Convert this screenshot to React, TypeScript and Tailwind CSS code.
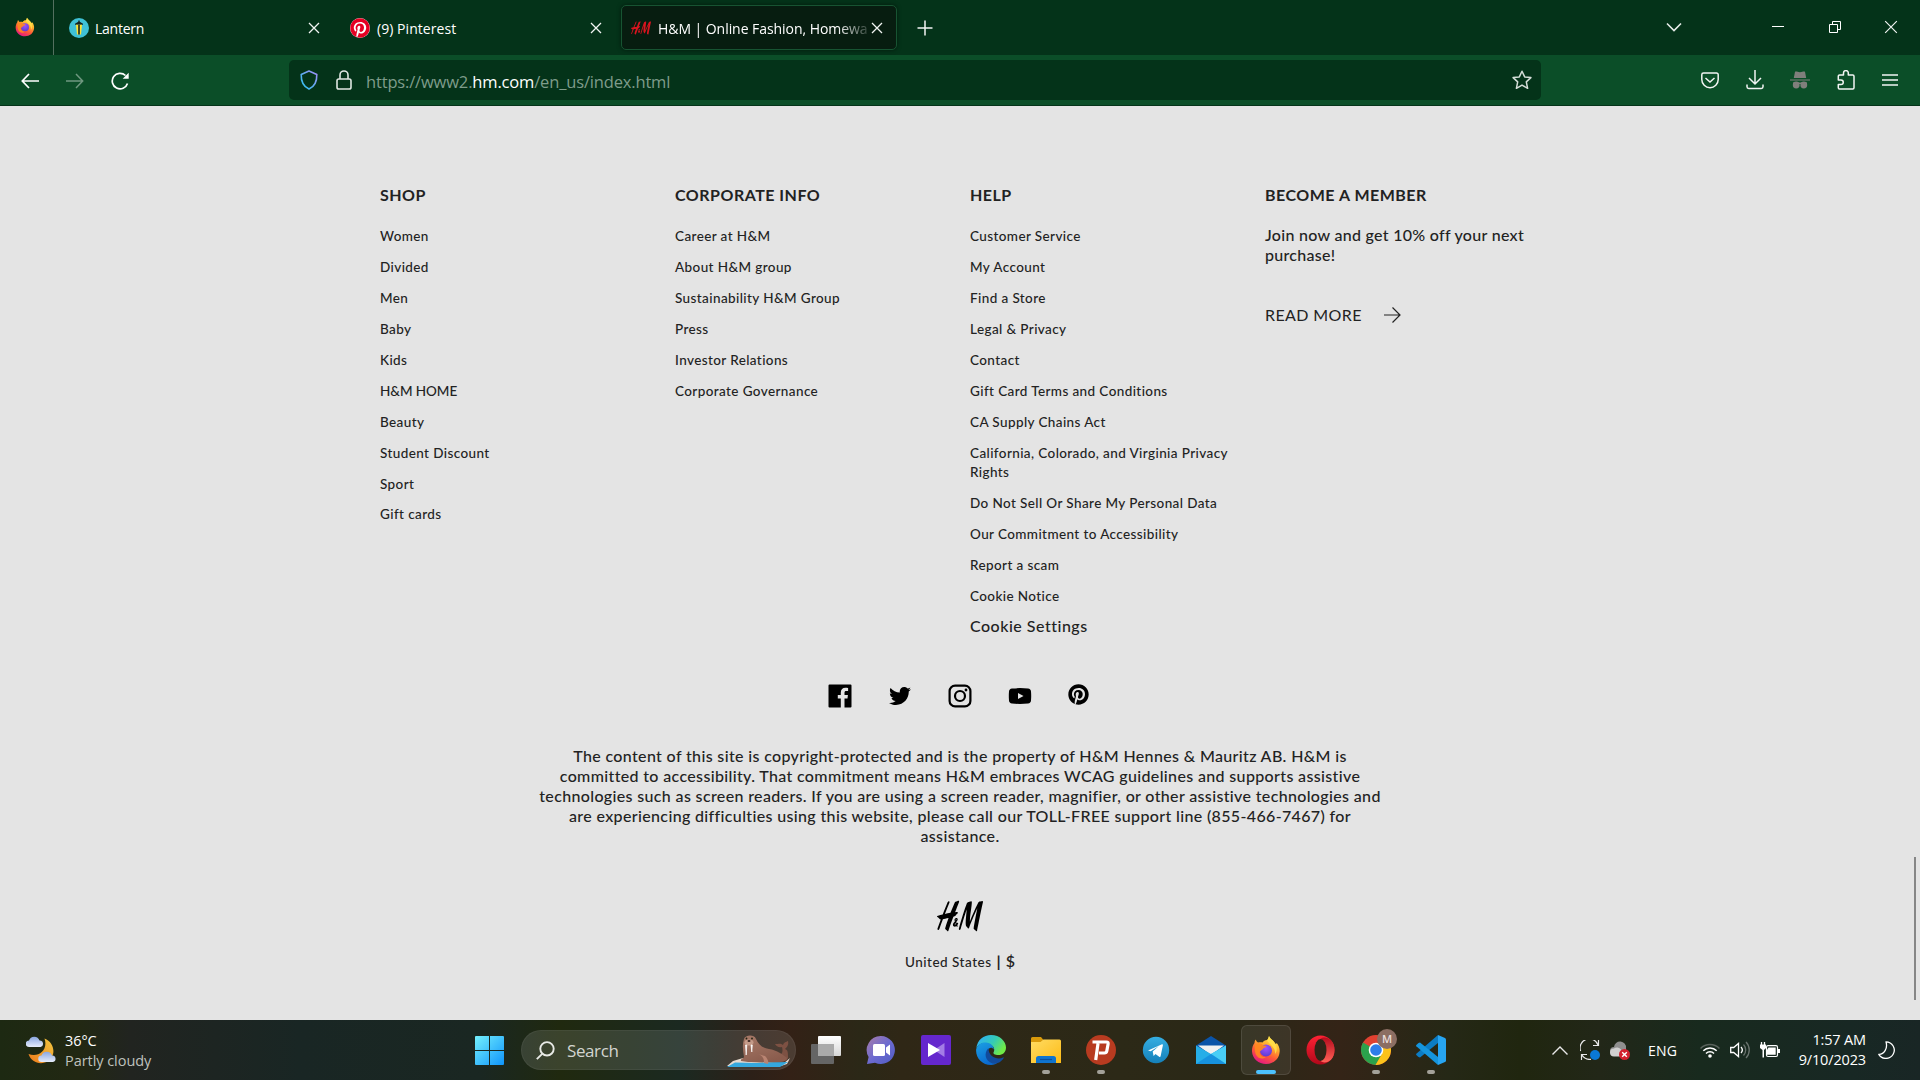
import React from "react";
import { FaTwitter, FaPinterest } from "react-icons/fa";
import { SiHandm } from "react-icons/si";

type IconProps = { className?: string };

const ui = "font-['Open_Sans',sans-serif]";

function FirefoxIcon({ className, id }: { className?: string; id: string }) {
  return (
    <svg viewBox="0 0 30 30" className={className}>
      <defs>
        <linearGradient id={id + "a"} x1="0.8" y1="0" x2="0.3" y2="1">
          <stop offset="0" stopColor="#fff44f" />
          <stop offset="0.35" stopColor="#ffb02e" />
          <stop offset="0.65" stopColor="#ff5a36" />
          <stop offset="1" stopColor="#e31587" />
        </linearGradient>
        <radialGradient id={id + "b"} cx="0.5" cy="0.3" r="0.7">
          <stop offset="0" stopColor="#a050ff" />
          <stop offset="1" stopColor="#5b3ed0" />
        </radialGradient>
      </defs>
      <path d="M18 1c1 3 5 4.500 6.500 8 .8-.2 1.200-1 1.200-1C28 10.500 29 14 28.600 17 28 24.500 22 29 15 29 7.500 29 1.500 24 1 16.500c-.2-3.500 1-6.500 2.500-8.500 0-1.500.5-2.500 1.200-3.500.5 1.500 1.500 2.500 2.300 3 1.500-.5 3-.5 4.500 0C12.500 6 14 5 16 5c1 0 1.500-2.500 2-4z" fill={`url(#${id}a)`} />
      <circle cx="15" cy="15.500" r="6" fill={`url(#${id}b)`} />
      <path d="M4 10c3-2.500 6-2 8 .2 1.500.6 3.200.4 3.500.9 0 1.200-2.200 1.800-3.300 2.300-.4 1.600-3 2-3.500 3.600 0 3 3 5.500 6.300 5-5 3.500-10 .5-11-5.500-.3-2.300-.4-4.500 0-6.500z" fill="#ff8a1e" opacity="0.9" />
      <path d="M18 1c1 3 5 4.500 6.500 8 2 4 1.500 8-.5 10 .5-5-2-7-4.500-9.500-1.500-1.500-3-3-3.500-4.500 1 0 1.500-2.500 2-4z" fill="#ffe14a" opacity="0.85" />
    </svg>
  );
}

function LanternIcon({ className }: IconProps) {
  return (
    <svg viewBox="0 0 20 20" className={className}>
      <circle cx="10" cy="10" r="10" fill="#3fc1d6" />
      <path d="M9.300 2.500h1.400v1.300l3.300 2v1H6v-1l3.300-2z" fill="#14231f" />
      <path d="M7 6.800h6L12 16.500H8z" fill="#ffe233" />
      <path d="M9.200 6.800h1.600v9.700H9.200z" fill="#14231f" />
    </svg>
  );
}

function CloseX({ className, w = 1.3 }: { className?: string; w?: number }) {
  return (
    <svg viewBox="0 0 12 12" className={className} fill="none" stroke="#f2f5f3" strokeWidth={w}>
      <path d="M1 1l10 10M11 1L1 11" />
    </svg>
  );
}

function TabStrip() {
  return (
    <div className="flex h-[55px] items-center bg-[#043319] text-white">
      <div className="flex h-full w-[54px] items-center border-r border-[#54705f] pb-0.5 pl-[15px]">
        <FirefoxIcon id="fxs" className="h-5 w-5" />
      </div>
      <div className="flex w-[296px] items-center pl-[15px]">
        <LanternIcon className="h-5 w-5" />
        <span className="ml-[6px] w-[213px] pt-0.5 text-[14px] leading-5 tracking-[-0.25px]">Lantern</span>
        <CloseX className="h-[12px] w-[12px]" />
      </div>
      <div className="flex w-[271px] items-center">
        <span className="flex h-5 w-5 items-center justify-center rounded-full bg-white">
          <FaPinterest className="h-5 w-5 text-[#e60023]" />
        </span>
        <span className="ml-[7px] w-[213px] pt-0.5 text-[14px] leading-5 tracking-[0.05px]">(9) Pinterest</span>
        <CloseX className="h-[12px] w-[12px]" />
      </div>
      <div className="flex h-[45px] w-[276px] items-center rounded-[5px] border border-[#175432] bg-[#071d10] pl-[9px] shadow-[0_0_4px_rgba(0,0,0,0.5)]">
        <SiHandm className="h-5 w-5 text-[#d8141f]" />
        <span className="ml-[7px] w-[210px] whitespace-nowrap pt-0.5 text-[14px] leading-5 tracking-[-0.05px] [mask-image:linear-gradient(to_right,#000_85%,transparent_103%)]">
          H&amp;M | Online Fashion, Homewa
        </span>
        <CloseX className="ml-[3px] h-[12px] w-[12px]" />
      </div>
      <svg viewBox="0 0 16 16" className="ml-5 h-4 w-4" stroke="#f2f5f3" strokeWidth="1.500">
        <path d="M8 .5v15M.5 8h15" />
      </svg>
      <div className="ml-auto flex items-center pb-[2px]">
        <svg viewBox="0 0 16 10" className="mr-[90px] h-[10px] w-4" fill="none" stroke="#e6ece8" strokeWidth="1.600">
          <path d="M1 1.500l7 7 7-7" />
        </svg>
        <div className="mr-[45px] h-px w-3 bg-white" />
        <svg viewBox="0 0 12 12" className="mr-[43px] h-3 w-3" fill="none" stroke="#fff" strokeWidth="1">
          <path d="M.5 3.500h8v8h-8zM3.500 3.500v-3h8v8h-3" />
        </svg>
        <CloseX className="mr-[22px] h-[14px] w-[14px]" w={1} />
      </div>
    </div>
  );
}

function Toolbar() {
  return (
    <div className="flex h-[51px] items-start border-b border-[#043319] bg-[#0b4e28] pt-[5px]">
      <div className="flex h-10 w-[289px] items-center gap-[27px] pl-[21px] pt-0.5">
        <svg viewBox="0 0 18 18" className="h-[18px] w-[18px]" fill="none" stroke="#fff" strokeWidth="1.700">
          <path d="M18 9H1.500M8 2L1.300 9 8 16" />
        </svg>
        <svg viewBox="0 0 18 18" className="h-[18px] w-[18px]" fill="none" stroke="#6f9880" strokeWidth="1.500">
          <path d="M0 9h16.500M10 2l6.700 7L10 16" />
        </svg>
        <svg viewBox="0 0 18 18" className="h-[18px] w-[18px]" fill="none" stroke="#fff" strokeWidth="1.700">
          <path d="M16.500 11.500A7.800 7.800 0 1 1 14.500 3.500" />
          <path d="M17.700.8v6h-6z" fill="#fff" stroke="none" />
        </svg>
      </div>
      <div className="flex h-10 w-[1252px] items-center rounded-[5px] bg-[#043319] pl-[11px] pr-[9px]">
        <svg viewBox="0 0 18 20" className="h-5 w-[18px]" fill="none" stroke="url(#shield)" strokeWidth="1.600">
          <defs>
            <linearGradient id="shield" x1="1" y1="0" x2="0" y2="1">
              <stop offset="0" stopColor="#a38cf5" />
              <stop offset="1" stopColor="#25c6ee" />
            </linearGradient>
          </defs>
          <path d="M9 1l7.800 3.500c.2 7-2 12-7.800 14.600C3.200 16.500 1 11.500 1.200 4.500z" strokeLinejoin="round" />
        </svg>
        <svg viewBox="0 0 16 20" className="ml-[18px] h-5 w-4" fill="none" stroke="#dfe6e1" strokeWidth="1.600">
          <rect x="1" y="9" width="14" height="10" rx="1.800" />
          <path d="M4 9V5a4 4 0 0 1 8 0v4" />
        </svg>
        <span className="ml-[14px] mt-1 whitespace-nowrap text-[16.500px] leading-6 tracking-[-0.16px] text-[#7f9c8b]">
          https://www2.<span className="text-white">hm.com</span>/en_us/index.html
        </span>
        <svg viewBox="0 0 20 20" className="ml-auto h-5 w-5" fill="none" stroke="#d5ded8" strokeWidth="1.500" strokeLinejoin="round">
          <path d="M10 1.200l2.700 5.700 6.200.7-4.600 4.300 1.300 6.400-5.600-3.200-5.600 3.200 1.300-6.400L1.100 7.600l6.200-.7z" />
        </svg>
      </div>
      <div className="ml-auto flex h-10 items-center pr-[22px]">
        <svg viewBox="0 0 18 18" className="h-[18px] w-[18px]" fill="none" stroke="#f2f5f3" strokeWidth="1.500">
          <path d="M2.500 2h13A1.700 1.700 0 0 1 17.200 3.700V8.500a8.200 8.200 0 0 1-16.400 0V3.700A1.700 1.700 0 0 1 2.500 2zM4.500 7L9 11l4.500-4" />
        </svg>
        <svg viewBox="0 0 18 20" className="ml-[27px] h-5 w-[18px]" fill="none" stroke="#f2f5f3" strokeWidth="1.500">
          <path d="M9 0v13.500M3 8l6 6 6-6M1 14.500v2.200A1.700 1.700 0 0 0 2.700 18.400h12.600a1.700 1.700 0 0 0 1.700-1.700v-2.200" />
        </svg>
        <svg viewBox="0 0 20 18" className="ml-[26px] h-[18px] w-5" fill="#807f7c">
          <path d="M5 .8c1.500-.8 2.500.4 5 .4s3.500-1.200 5-.4L16.200 7H3.800zM0 8.500h20v1H0z" />
          <circle cx="6.200" cy="14" r="3.400" />
          <circle cx="13.800" cy="14" r="3.400" />
          <path d="M3 11.500h14v1.500H3z" />
        </svg>
        <svg viewBox="0 0 18 20" className="ml-[27px] h-5 w-[18px]" fill="none" stroke="#f2f5f3" strokeWidth="1.500" strokeLinejoin="round">
          <path d="M1.300 10V6.200A1.200 1.200 0 0 1 2.500 5H6.500V3a2.400 2.400 0 0 1 4.800 0v2h4.500A1.200 1.200 0 0 1 17 6.200v11.600a1.200 1.200 0 0 1-1.200 1.200H2.500a1.200 1.200 0 0 1-1.200-1.200V14.500H4a2.200 2.200 0 0 0 0-4.500z" />
        </svg>
        <svg viewBox="0 0 16 14" className="ml-[27px] h-[14px] w-4" stroke="#f2f5f3" strokeWidth="1.500">
          <path d="M0 2h16M0 7h16M0 12h16" />
        </svg>
      </div>
    </div>
  );
}

const shop = ["Women", "Divided", "Men", "Baby", "Kids", "H&M HOME", "Beauty", "Student Discount", "Sport", "Gift cards"];
const corporate = ["Career at H&M", "About H&M group", "Sustainability H&M Group", "Press", "Investor Relations", "Corporate Governance"];
const help = [
  "Customer Service",
  "My Account",
  "Find a Store",
  "Legal & Privacy",
  "Contact",
  "Gift Card Terms and Conditions",
  "CA Supply Chains Act",
  "California, Colorado, and Virginia Privacy Rights",
  "Do Not Sell Or Share My Personal Data",
  "Our Commitment to Accessibility",
  "Report a scam",
  "Cookie Notice",
];

function Heading({ children }: { children: React.ReactNode }) {
  return <h3 className="mb-5 text-[16px] font-bold leading-5 tracking-[0.5px]">{children}</h3>;
}

function LinkColumn({ title, items, children }: { title: string; items: string[]; children?: React.ReactNode }) {
  return (
    <div className="w-[295px] pr-[30px]">
      <Heading>{title}</Heading>
      <ul className="mt-[22px] flex flex-col gap-3 text-[13.500px] font-medium leading-[19px] tracking-[0.4px]">
        {items.map((t) => (
          <li key={t} className={t === "H&M HOME" ? "tracking-[-0.05px]" : t === "Gift cards" ? "-mt-px" : ""}>
            {t}
          </li>
        ))}
      </ul>
      {children}
    </div>
  );
}

function Footer() {
  return (
    <div className="flex h-[914px] bg-[#e4e4e4] font-[Lato,sans-serif] text-[#222]">
      <div className="flex flex-1 flex-col items-center pl-[6px]">
        <div className="mt-[79px] flex h-[453px] w-[1160px]">
          <LinkColumn title="SHOP" items={shop} />
          <LinkColumn title="CORPORATE INFO" items={corporate} />
          <LinkColumn title="HELP" items={help}>
            <p className="mt-[10px] text-[16px] font-medium leading-5 tracking-[0.5px]">Cookie Settings</p>
          </LinkColumn>
          <div className="w-[275px]">
            <Heading>BECOME A MEMBER</Heading>
            <p className="w-[270px] text-[16px] font-medium leading-5 tracking-[0.29px]">Join now and get 10% off your next purchase!</p>
            <div className="mt-10 flex items-center text-[16px] leading-5 tracking-[0.4px]">
              READ MORE
              <svg viewBox="0 0 17 16" className="ml-[22px] h-4 w-[17px]" fill="none" stroke="#222" strokeWidth="1.200">
                <path d="M0 8h16M8.500.5L16 8l-7.500 7.500" />
              </svg>
            </div>
          </div>
        </div>
        <div className="mt-[46px] flex h-6 w-[264px] items-center gap-9">
          <svg viewBox="0 0 24 24" className="h-6 w-6">
            <path d="M1.500.5h21a1 1 0 0 1 1 1v21a1 1 0 0 1-1 1h-6v-9h3l.4-3.500h-3.400V8.700c0-1 .4-1.700 1.700-1.700h1.900V3.900c-.4-.1-1.500-.2-2.700-.2-2.800 0-4.600 1.700-4.600 4.700V11H9.800v3.500h3v9H1.500a1 1 0 0 1-1-1v-21a1 1 0 0 1 1-1z" />
          </svg>
          <FaTwitter className="h-[22px] w-6 text-black" />
          <svg viewBox="0 0 24 24" className="h-6 w-6" fill="none" stroke="#000" strokeWidth="2.200">
            <rect x="1.600" y="1.600" width="20.800" height="20.800" rx="5.500" />
            <circle cx="12" cy="12" r="5" />
            <circle cx="18" cy="6" r="1.400" fill="#000" stroke="none" />
          </svg>
          <svg viewBox="0 0 24 24" className="h-6 w-6">
            <path d="M4 4.500q8-.8 16 0 2.800.3 3 3 .4 4.500 0 9-.2 2.700-3 3-8 .8-16 0-2.800-.3-3-3-.4-4.500 0-9 .2-2.700 3-3z" />
            <path d="M10 9l5.500 3-5.500 3z" fill="#e4e4e4" />
          </svg>
          <FaPinterest className="mb-[3px] h-[21px] w-[21px] text-black" />
        </div>
        <p className="mt-[38px] w-[860px] text-center text-[16px] font-medium leading-5 tracking-[0.35px]">
          The content of this site is copyright-protected and is the property of H&amp;M Hennes &amp; Mauritz AB. H&amp;M is
          <br />
          committed to accessibility. That commitment means H&amp;M embraces WCAG guidelines and supports assistive
          <br />
          technologies such as screen readers. If you are using a screen reader, magnifier, or other assistive technologies and
          <br />
          are experiencing difficulties using this website, please call our TOLL-FREE support line (855-466-7467) for
          <br />
          assistance.
        </p>
        <SiHandm className="mt-[47px] h-[46px] w-[46px] text-black" />
        <div className="mt-3 flex items-baseline leading-5">
          <span className="text-[13.500px] font-medium tracking-[0.5px]">United States</span>
          <span className="ml-[5px] text-[16px] font-bold">|</span>
          <span className="ml-[5px] text-[16px] font-semibold">$</span>
        </div>
      </div>
      <div className="flex w-[6px] flex-col pt-[751px]">
        <div className="h-[143px] w-[2px] bg-[#868686]" />
      </div>
    </div>
  );
}

function Walrus({ className }: IconProps) {
  return (
    <svg viewBox="0 0 66 33" className={className}>
      <defs>
        <linearGradient id="wal" x1="0" y1="0" x2="0.6" y2="1">
          <stop offset="0" stopColor="#a87a68" />
          <stop offset="1" stopColor="#8a5c4d" />
        </linearGradient>
      </defs>
      <path d="M0 32l6-5 10-3 8 4 33 1 6-5-3 6-6 2z" fill="#e6d9cf" />
      <path d="M50 22c6-1 6-5 5-9-3 1-6-1-7-3 3 0 6-1 8 1 1-3 3-3 5-4 1 4-1 6-3 8 3 1 3 4 3 7 1 4-4 6-10 6z" fill="#7d5143" />
      <path d="M17 5c1-4 10-5 12 0 3 6 6 9 13 10 8 1 14 6 18 9 0 3-5 4-10 4H21l-7-1c-1-2 3-3 3-4-1-6-2-12 0-18z" fill="url(#wal)" />
      <path d="M0 33l8-4.500 22 .5 31-1-8 5z" fill="#35a8de" />
      <path d="M31 20c4 1 6 4 6 9l4 1c1-3-1-6-3-8z" fill="#b98472" />
      <ellipse cx="22" cy="8.500" rx="4.500" ry="3" fill="#c49a88" />
      <circle cx="19.500" cy="4.500" r="0.900" fill="#221" />
      <circle cx="25" cy="4.500" r="0.900" fill="#221" />
      <ellipse cx="22" cy="7" rx="1.500" ry="0.900" fill="#3a2420" />
      <path d="M18.500 11h1.300l-.6 10zM24 11h1.300l-.5 7z" stroke="#fff" strokeWidth="0.700" fill="#fff" />
    </svg>
  );
}

function AppSlot({ children, state }: { children: React.ReactNode; state?: "open" | "active" }) {
  return (
    <div
      className={
        "relative flex h-[50px] w-[50px] items-center justify-center rounded-md border " +
        (state === "active" ? "border-white/10 bg-white/[0.07]" : "border-transparent")
      }
    >
      {children}
      {state === "open" && <span className="absolute bottom-0 left-5 h-1 w-2 rounded-full bg-[#a3a199]" />}
      {state === "active" && <span className="absolute bottom-0 left-[14px] h-1 w-5 rounded-full bg-[#4cc2ff]" />}
    </div>
  );
}

const appSize = "h-[30px] w-[30px]";

function Apps() {
  return (
    <div className="ml-[5px] flex gap-[5px]">
      <AppSlot>
        <svg viewBox="0 0 30 30" className={appSize}>
          <defs>
            <linearGradient id="tv" x1="0" y1="0" x2="0" y2="1">
              <stop offset="0" stopColor="#fff" />
              <stop offset="1" stopColor="#d6d6d6" />
            </linearGradient>
          </defs>
          <rect x="0" y="9" width="23" height="20" rx="1" fill="#656565" />
          <rect x="7" y="1" width="23" height="20" rx="1" fill="url(#tv)" />
          <path d="M7 9h16v12H7z" fill="#aaa" />
        </svg>
      </AppSlot>
      <AppSlot>
        <svg viewBox="0 0 30 30" className={appSize}>
          <defs>
            <linearGradient id="chat" x1="0" y1="0" x2="1" y2="1">
              <stop offset="0.100" stopColor="#9d78b0" />
              <stop offset="0.500" stopColor="#6d6bd0" />
              <stop offset="1" stopColor="#4f5bc4" />
            </linearGradient>
          </defs>
          <path d="M15 1a14 14 0 1 1-6 26.700L1 29l1.600-7A14 14 0 0 1 15 1z" fill="url(#chat)" />
          <rect x="7" y="9" width="12" height="12" rx="1.500" fill="#fff" />
          <path d="M20 12.500l4-3v11l-4-3z" fill="#fff" />
        </svg>
      </AppSlot>
      <AppSlot>
        <svg viewBox="0 0 30 30" className={appSize}>
          <rect width="30" height="30" rx="2" fill="#6527cd" />
          <path d="M23.500 8v14L13 15z" fill="#a37ce6" />
          <path d="M7 8v14l12-7z" fill="#fff" />
        </svg>
      </AppSlot>
      <AppSlot>
        <svg viewBox="0 0 30 30" className={appSize}>
          <defs>
            <linearGradient id="ed1" x1="0" y1="0" x2="1" y2="0.500">
              <stop offset="0.200" stopColor="#2fb5e9" />
              <stop offset="0.600" stopColor="#35cbb4" />
              <stop offset="1" stopColor="#70ea48" />
            </linearGradient>
            <linearGradient id="ed2" x1="0" y1="0" x2="0.500" y2="1">
              <stop offset="0" stopColor="#1ba0e4" />
              <stop offset="1" stopColor="#0a68ce" />
            </linearGradient>
          </defs>
          <path d="M.3 13C1.500 5 7.500 0 15 0c9 0 15 6.500 15 12.500 0 5-3.500 7.500-7.500 7.500-4 0-5.500-1.500-5-2.500 1-1.500 1.200-4-.5-6C12.500 6.500 4 6.500.3 13z" fill="url(#ed1)" />
          <path d="M.2 14C2 9 6 7.300 10 7.500c4.500.2 8 3.500 7.800 7-2.300-3.500-6.300-1-6.300 3 0 6 5.500 9.500 11.500 9-2.500 2.500-5.500 3.500-8 3.500C6 30-.8 22.500.2 14z" fill="url(#ed2)" />
          <path d="M12.500 13c-5 5-3.500 13 4 15.500 4.500.7 9-1.500 11.200-5.500.2-.6-.2-.8-.7-.5-5 2.500-14.500 0-14.500-9.500z" fill="#114b9c" />
        </svg>
      </AppSlot>
      <AppSlot state="open">
        <svg viewBox="0 0 30 30" className={appSize}>
          <defs>
            <linearGradient id="fold" x1="0" y1="0" x2="1" y2="1">
              <stop offset="0" stopColor="#ffdc63" />
              <stop offset="1" stopColor="#fdbb16" />
            </linearGradient>
          </defs>
          <path d="M0 3.500A1.500 1.500 0 0 1 1.500 2H10l2.500 3L10 8H0z" fill="#d99a0b" />
          <path d="M0 7h9.500l3-2.500h16A1.500 1.500 0 0 1 30 6v22H0z" fill="url(#fold)" />
          <path d="M5 28v-4.500A2.500 2.500 0 0 1 7.500 21h15a2.500 2.500 0 0 1 2.500 2.500V28z" fill="#0f74cf" />
          <path d="M9 24.500h12" stroke="#0a4f9e" strokeWidth="1.200" />
        </svg>
      </AppSlot>
      <AppSlot state="open">
        <svg viewBox="0 0 30 30" className={appSize}>
          <circle cx="15" cy="15" r="15" fill="#b83b20" />
          <path d="M6.500 7h14q2 0 1.600 2l-1.300 7q-.4 2-2.400 2h-5.500M12 8.500l-2.300 16.500" fill="none" stroke="#fff" strokeWidth="3.200" />
        </svg>
      </AppSlot>
      <AppSlot>
        <svg viewBox="0 0 30 30" className={appSize}>
          <defs>
            <linearGradient id="tg" x1="0" y1="0" x2="0" y2="1">
              <stop offset="0" stopColor="#35aee2" />
              <stop offset="1" stopColor="#1580b9" />
            </linearGradient>
          </defs>
          <circle cx="15" cy="15" r="13.200" fill="url(#tg)" />
          <path d="M7 15.500l14-6.200c.6-.2 1 .1.900.9l-2.300 11c-.2.800-.8.900-1.400.5l-3.700-2.700-1.900 1.900-.9-4.300 6.200-5.600-8.200 5.200z" fill="#fff" />
        </svg>
      </AppSlot>
      <AppSlot>
        <svg viewBox="0 0 30 30" className={appSize}>
          <path d="M0 10.500L15 1l15 9.500v6H0z" fill="#0b54a8" />
          <path d="M2 10.500h26L15 20z" fill="#f1f1f1" />
          <path d="M0 10.500L15 19l15-8.500V29H0z" fill="#26aee8" />
          <path d="M15 19l15-8.500V29z" fill="#49cef6" />
          <path d="M0 29l15-10 15 10z" fill="#1792df" />
        </svg>
      </AppSlot>
      <AppSlot state="active">
        <FirefoxIcon id="fxl" className={appSize} />
      </AppSlot>
      <AppSlot>
        <svg viewBox="0 0 30 30" className={appSize}>
          <defs>
            <linearGradient id="op" x1="0" y1="0" x2="0" y2="1">
              <stop offset="0" stopColor="#ff2234" />
              <stop offset="1" stopColor="#b1081a" />
            </linearGradient>
            <linearGradient id="op2" x1="0" y1="0" x2="0" y2="1">
              <stop offset="0" stopColor="#b70d1e" />
              <stop offset="1" stopColor="#ff6257" />
            </linearGradient>
          </defs>
          <path d="M14.500.5c8 0 14 6.500 14 14.500s-6 14.500-14 14.500S.5 23 .5 15 6.500.5 14.500.5z" fill="url(#op)" />
          <path d="M14.500 4c4-3.500 14-.5 14 11s-10 14.500-14 11z" fill="url(#op2)" />
          <ellipse cx="14.500" cy="15" rx="6" ry="11" fill="#302517" />
        </svg>
      </AppSlot>
      <AppSlot state="open">
        <svg viewBox="0 0 30 30" className={appSize}>
          <circle cx="15" cy="15" r="15" fill="#e04131" />
          <path d="M15 15L2 7.500A15 15 0 0 0 14.500 30L21.500 18.700z" fill="#2ba24c" />
          <path d="M15 8h13.300A15 15 0 0 1 14.500 30L21 18.700z" fill="#fcc21b" />
          <circle cx="15" cy="15" r="7.300" fill="#fff" />
          <circle cx="15" cy="15" r="5.800" fill="#2f7de9" />
        </svg>
        <span className="absolute left-[25px] top-[3px] flex h-5 w-5 items-center justify-center rounded-full bg-[#8c6e63] text-[11px] font-semibold text-[#e9dfdb]">
          M
        </span>
      </AppSlot>
      <AppSlot state="open">
        <svg viewBox="0 0 30 30" className={appSize}>
          <path d="M22 0v8L4 22.500 2.500 22 .3 20q-.5-.7 0-1.300z" fill="#0c7cc4" />
          <path d="M22 30v-8L4 7.500 2.500 8 .3 10q-.5.700 0 1.300z" fill="#1595dd" />
          <path d="M22 0l7 3q1 .5 1 1.500v21q0 1-1 1.500l-7 3z" fill="#27a5f2" />
        </svg>
      </AppSlot>
    </div>
  );
}

function Tray() {
  return (
    <div className="ml-auto flex items-center text-[14px] text-white">
      <svg viewBox="0 0 16 9" className="h-[9px] w-4" fill="none" stroke="#e8e8e8" strokeWidth="1.400">
        <path d="M.5 8.500L8 1l7.500 7.500" />
      </svg>
      <svg viewBox="0 0 20 20" className="ml-3 h-5 w-5" fill="none" stroke="#e8e8e8" strokeWidth="1.200">
        <path d="M.6 11A9 9 0 0 1 18 5M18.500 0v5.500H13M1.500 20v-5.500H7M2 15a9 9 0 0 0 9 4.300" />
        <circle cx="15" cy="15" r="5" fill="#0a78d7" stroke="none" />
      </svg>
      <svg viewBox="0 0 20 20" className="ml-[10px] h-5 w-5">
        <path d="M4 15a4 4 0 0 1 0-8 6 6 0 0 1 12 1v7z" fill="#8f8f8f" />
        <path d="M4 16.500a4 4 0 0 1 0-8 5 5 0 0 1 7 1l1 7z" fill="#d0d0d0" />
        <circle cx="14.500" cy="14.500" r="5.500" fill="#d3202f" />
        <path d="M12.200 12.200l4.600 4.600M16.800 12.200l-4.600 4.600" stroke="#fff" strokeWidth="1.400" />
      </svg>
      <span className="ml-[18px] w-[30px] tracking-[0.2px]">ENG</span>
      <svg viewBox="0 0 20 16" className="ml-[22px] h-4 w-5" fill="none" stroke="#fff" strokeWidth="1.500">
        <path d="M.5 6.500a13.500 13.500 0 0 1 19 0" stroke="#59625c" />
        <path d="M3.300 8.800a9.500 9.500 0 0 1 13.400 0M6 11.500a5.600 5.600 0 0 1 8 0" />
        <circle cx="10" cy="14" r="1.800" fill="#fff" stroke="none" />
      </svg>
      <svg viewBox="0 0 20 18" className="ml-[10px] h-[18px] w-5" fill="none" stroke="#fff" strokeWidth="1.300">
        <path d="M.7 6.500h3L8.500 2.500v13L3.700 11.500h-3z" />
        <path d="M11 6a4.500 4.500 0 0 1 0 6" />
        <path d="M13.500 3.500a8 8 0 0 1 0 11M16 1a11.500 11.500 0 0 1 0 16" stroke="#69736e" />
      </svg>
      <svg viewBox="0 0 20 16" className="ml-[10px] h-4 w-5">
        <path d="M1.500 0v3M4.500 0v3" stroke="#fff" strokeWidth="1.300" />
        <path d="M0 2.500h6V6L4 8v7.500H2.500V8L0 6z" fill="#fff" />
        <rect x="6.500" y="3.700" width="11" height="10.800" rx="1.500" fill="none" stroke="#fff" strokeWidth="1.200" />
        <path d="M8.500 5.500h7.200v7.200H6V9.500zM18 7h2v4h-2z" fill="#fff" />
      </svg>
      <div className="ml-4 w-[70px] whitespace-nowrap text-right text-[14.500px] leading-5 tracking-[-0.15px]">
        <div>1:57 AM</div>
        <div>9/10/2023</div>
      </div>
      <svg viewBox="0 0 17 18" className="ml-3 mr-[25px] h-[18px] w-[17px]" fill="none" stroke="#fff" strokeWidth="1.300">
        <path d="M8 .8a8.300 8.300 0 1 1-7.200 12.500C6 13.500 10 7.500 8 .8z" strokeLinejoin="round" />
      </svg>
    </div>
  );
}

function Taskbar() {
  return (
    <div className="flex h-[60px] items-center bg-[linear-gradient(90deg,#1d2912_0px,#222813_80px,#212420_130px,#192624_300px,#1a2722_480px,#20290f_560px,#1b2921_680px,#2c2018_750px,#332116_790px,#2b2817_860px,#2f2716_900px,#2c2917_1120px,#2a2817_1240px,#342417_1340px,#252816_1450px,#20260f_1520px,#222718_1600px,#182a1e_1700px,#182824_1850px,#192625_1920px)]">
      <div className="flex w-[475px] items-center pl-[26px]">
        <svg viewBox="0 0 30 28" className="h-7 w-[30px]">
          <defs>
            <linearGradient id="moon" x1="1" y1="0" x2="0" y2="1">
              <stop offset="0" stopColor="#f0c741" />
              <stop offset="1" stopColor="#ef7a1a" />
            </linearGradient>
            <linearGradient id="cl" x1="0" y1="0" x2="0" y2="1">
              <stop offset="0" stopColor="#88a5e0" />
              <stop offset="1" stopColor="#e6ecfb" />
            </linearGradient>
          </defs>
          <path d="M18.500 2.500c11 4 12 19 2 23.500-7 3-15.500 0-18-8 10 4 20-4 16-15.500z" fill="url(#moon)" />
          <path d="M3 11a3.200 3.200 0 0 1 0-6.500 5.500 5.500 0 0 1 10.500 0 3.300 3.300 0 0 1 1 6.500z" fill="url(#cl)" />
          <path d="M15.500 26a3.200 3.200 0 0 1 0-6.500 5.500 5.500 0 0 1 10.500 0 3.300 3.300 0 0 1 1 6.500z" fill="url(#cl)" />
        </svg>
        <div className="ml-[9px] mt-0.5 text-[14.500px] leading-5 text-white">
          <div className="tracking-[-0.1px]">36°C</div>
          <div className="tracking-[-0.05px] text-[#bfc1bd]">Partly cloudy</div>
        </div>
      </div>
      <svg viewBox="0 0 29 29" className="h-[29px] w-[29px]">
        <defs>
          <linearGradient id="win" gradientUnits="userSpaceOnUse" x1="0" y1="0" x2="29" y2="29">
            <stop offset="0" stopColor="#74f0fd" />
            <stop offset="1" stopColor="#0f94fb" />
          </linearGradient>
        </defs>
        <path d="M0 1q0-1 1-1h13v14H0zM15 0h13q1 0 1 1v13H15zM0 15h14v14H1q-1 0-1-1zM15 15h14v13q0 1-1 1H15z" fill="url(#win)" />
      </svg>
      <div className="ml-[17px] flex h-10 w-[275px] items-center rounded-full border border-white/5 bg-white/[0.12]">
        <svg viewBox="0 0 19 19" className="ml-[14px] h-[19px] w-[19px]" fill="none" stroke="#e8eae6" strokeWidth="1.900">
          <circle cx="11" cy="7.800" r="6.700" />
          <path d="M6.200 12.800L.8 18.200" />
        </svg>
        <span className="ml-3 w-[160px] pt-0.5 text-[17px] leading-6 tracking-[-0.4px] text-[#d3d5d0]">Search</span>
        <Walrus className="h-[33px] w-[66px]" />
      </div>
      <Apps />
      <Tray />
    </div>
  );
}

export default function App() {
  return (
    <div className={`h-[1080px] w-[1920px] overflow-hidden ${ui}`}>
      <TabStrip />
      <Toolbar />
      <Footer />
      <Taskbar />
    </div>
  );
}
